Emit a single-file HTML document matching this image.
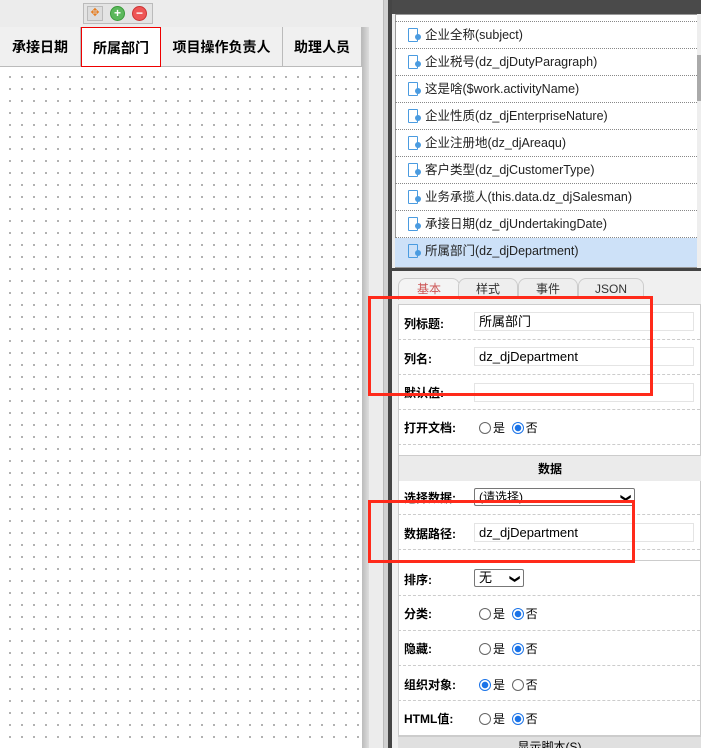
<!DOCTYPE html><html><head><meta charset="utf-8"><style>
*{box-sizing:border-box;margin:0;padding:0}
body{width:701px;height:748px;overflow:hidden;position:relative;background:#ececec;font-family:"Liberation Sans","Noto Sans CJK SC",sans-serif;font-size:13px;color:#000}
.a{position:absolute}
.canvas{left:0;top:67px;width:362px;height:681px;background-color:#fff;background-image:radial-gradient(#999 0.8px,transparent 1px);background-size:12px 12px;background-position:4px 4px}
.th{top:27px;height:40px;background:#f0f0f0;border-bottom:1px solid #bbb;border-right:1px solid #bbb;font-weight:bold;font-size:14px;line-height:40px;text-align:center}
.row{left:395px;width:302px;height:27px;border-bottom:1px dotted #888;font-size:12.5px;color:#222;line-height:26px;padding-left:30px}
.row i{position:absolute;left:13px;top:6px;width:10px;height:14px;border:1.5px solid #4a9be0;border-radius:1px}
.row i:after{content:"";position:absolute;right:-4px;bottom:1px;width:6px;height:6px;border-radius:50%;background:#4a9be0}
.lab{left:404px;font-weight:bold;font-size:12px}
.inp{left:474px;width:220px;height:19px;border:1px solid #e4e4e4;background:#fff;font-size:13px;line-height:17px;padding-left:4px}
.sep{left:398px;width:302px;border-top:1px dashed #ccc}
.rad{font-size:12px}
.rad b{display:inline-block;width:12px;height:12px;border:1px solid #666;border-radius:50%;vertical-align:-2px;margin-right:2px;background:#fff}
.rad b.on{border:1px solid #1a73e8;background:radial-gradient(#1a73e8 3px,#fff 3.5px)}
.red{border:3px solid #ff2a1a}
.chev{position:absolute;right:5px;top:1px;font-size:10px;font-weight:bold;transform:rotate(90deg)}
</style></head><body>
<div class="a" style="left:0;top:0;width:384px;height:27px;background:#ececec"></div>
<div class="a" style="left:83px;top:3px;width:70px;height:21px;background:#e4e4e4;border:1px solid #bbb"></div>
<div class="a" style="left:87px;top:6px;width:16px;height:15px;background:#ddd;border:1px solid #bbb;color:#e67e22;font-size:11px;text-align:center;line-height:13px">✥</div>
<div class="a" style="left:110px;top:6px;width:15px;height:15px;border-radius:50%;background:#5cb85c;border:1px solid #3a9a3a;color:#fff;font-size:12px;font-weight:bold;text-align:center;line-height:12px">+</div>
<div class="a" style="left:132px;top:6px;width:15px;height:15px;border-radius:50%;background:#e55;border:1px solid #c33;color:#fff;font-size:12px;font-weight:bold;text-align:center;line-height:12px">−</div>
<div class="a canvas"></div>
<div class="a th" style="left:0;width:81px">承接日期</div>
<div class="a th" style="left:81px;width:80px;background:#fff;border:1px solid #e00">所属部门</div>
<div class="a th" style="left:161px;width:122px">项目操作负责人</div>
<div class="a th" style="left:283px;width:79px">助理人员</div>
<div class="a" style="left:362px;top:27px;width:7px;height:721px;background:linear-gradient(90deg,#bbb,#ddd)"></div>
<div class="a" style="left:383px;top:0;width:1px;height:748px;background:#bbb"></div>
<div class="a" style="left:384px;top:0;width:4px;height:748px;background:#d0d0d0"></div>
<div class="a" style="left:388px;top:0;width:4px;height:748px;background:#454545"></div>
<div class="a" style="left:392px;top:0;width:309px;height:14px;background:#4a4a4a"></div>
<div class="a" style="left:395px;top:14px;width:306px;height:254px;background:#fff;border:1px solid #999"></div>
<div class="a" style="left:697px;top:14px;width:4px;height:254px;background:#eee"></div>
<div class="a" style="left:697px;top:55px;width:4px;height:46px;background:#aaa"></div>
<div class="a row" style="top:14px;height:8px"></div>
<div class="a row" style="top:22px"><i></i>企业全称(subject)</div>
<div class="a row" style="top:49px"><i></i>企业税号(dz_djDutyParagraph)</div>
<div class="a row" style="top:76px"><i></i>这是啥($work.activityName)</div>
<div class="a row" style="top:103px"><i></i>企业性质(dz_djEnterpriseNature)</div>
<div class="a row" style="top:130px"><i></i>企业注册地(dz_djAreaqu)</div>
<div class="a row" style="top:157px"><i></i>客户类型(dz_djCustomerType)</div>
<div class="a row" style="top:184px"><i></i>业务承揽人(this.data.dz_djSalesman)</div>
<div class="a row" style="top:211px"><i></i>承接日期(dz_djUndertakingDate)</div>
<div class="a row" style="top:238px;background:#cde1f8;border:none;height:29px"><i></i>所属部门(dz_djDepartment)</div>
<div class="a" style="left:392px;top:268px;width:309px;height:3px;background:#444"></div>
<div class="a" style="left:392px;top:271px;width:309px;height:477px;background:#f0f0f0"></div>
<div class="a" style="left:398px;top:278px;width:62px;height:22px;border:1px solid #ccc;border-bottom:none;border-radius:8px 8px 0 0;background:#f4f4f4;color:#c55;font-size:12px;text-align:center;line-height:20px">基本</div>
<div class="a" style="left:458px;top:278px;width:60px;height:20px;border:1px solid #ccc;border-radius:8px 8px 0 0;background:#eee;font-size:12px;text-align:center;line-height:20px;color:#333">样式</div>
<div class="a" style="left:518px;top:278px;width:60px;height:20px;border:1px solid #ccc;border-radius:8px 8px 0 0;background:#eee;font-size:12px;text-align:center;line-height:20px;color:#333">事件</div>
<div class="a" style="left:578px;top:278px;width:66px;height:20px;border:1px solid #ccc;border-radius:8px 8px 0 0;background:#eee;font-size:12px;text-align:center;line-height:20px;color:#333">JSON</div>
<div class="a" style="left:398px;top:304px;width:303px;height:432px;background:#fff;border:1px solid #ccc"></div>
<div class="a lab" style="top:315px">列标题:</div><div class="a inp" style="top:312px">所属部门</div>
<div class="a sep" style="top:339px"></div>
<div class="a lab" style="top:350px">列名:</div><div class="a inp" style="top:347px">dz_djDepartment</div>
<div class="a sep" style="top:374px"></div>
<div class="a lab" style="top:384px">默认值:</div><div class="a inp" style="top:383px"></div>
<div class="a sep" style="top:409px"></div>
<div class="a lab" style="top:419px">打开文档:</div><div class="a rad" style="left:479px;top:419px"><b></b>是 &nbsp;<b class="on"></b>否</div>
<div class="a sep" style="top:444px"></div>
<div class="a" style="left:399px;top:455px;width:302px;height:26px;background:#ebebeb;border-top:1px solid #ccc;font-weight:bold;font-size:12px;text-align:center;line-height:26px">数据</div>
<div class="a lab" style="top:489px">选择数据:</div>
<div class="a" style="left:474px;top:488px;width:161px;height:18px;border:1px solid #777;border-radius:2px;background:#fff;font-size:12px;line-height:16px;padding-left:4px">(请选择)<span class="chev">❯</span></div>
<div class="a sep" style="top:514px"></div>
<div class="a lab" style="top:525px">数据路径:</div><div class="a inp" style="top:523px">dz_djDepartment</div>
<div class="a sep" style="top:549px"></div>
<div class="a" style="left:399px;top:560px;width:302px;border-top:1px solid #ccc"></div>
<div class="a lab" style="top:571px">排序:</div>
<div class="a" style="left:474px;top:569px;width:50px;height:18px;border:1px solid #777;border-radius:2px;background:#fff;font-size:13px;line-height:16px;padding-left:4px">无<span class="chev">❯</span></div>
<div class="a sep" style="top:595px"></div>
<div class="a lab" style="top:605px">分类:</div><div class="a rad" style="left:479px;top:605px"><b></b>是 &nbsp;<b class="on"></b>否</div>
<div class="a sep" style="top:630px"></div>
<div class="a lab" style="top:640px">隐藏:</div><div class="a rad" style="left:479px;top:640px"><b></b>是 &nbsp;<b class="on"></b>否</div>
<div class="a sep" style="top:665px"></div>
<div class="a lab" style="top:676px">组织对象:</div><div class="a rad" style="left:479px;top:676px"><b class="on"></b>是 &nbsp;<b></b>否</div>
<div class="a sep" style="top:700px"></div>
<div class="a lab" style="top:710px">HTML值:</div><div class="a rad" style="left:479px;top:710px"><b></b>是 &nbsp;<b class="on"></b>否</div>
<div class="a" style="left:398px;top:736px;width:303px;height:12px;background:#e0e0e0;border-top:1px solid #ccc;font-size:12px;line-height:20px;text-align:center;overflow:hidden">显示脚本(S)</div>
<div class="a red" style="left:368px;top:296px;width:285px;height:100px"></div>
<div class="a red" style="left:368px;top:500px;width:267px;height:63px"></div>
</body></html>
